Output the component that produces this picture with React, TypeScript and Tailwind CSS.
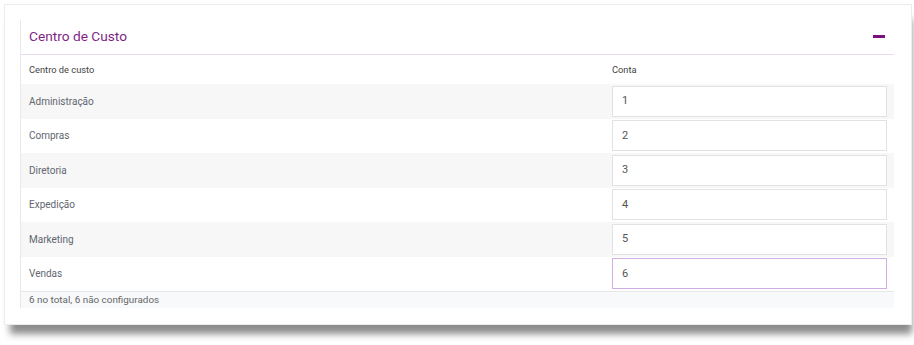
import React from "react"

const rows = [
  { name: "Administração", conta: "1" },
  { name: "Compras", conta: "2" },
  { name: "Diretoria", conta: "3" },
  { name: "Expedição", conta: "4" },
  { name: "Marketing", conta: "5" },
  { name: "Vendas", conta: "6" },
]

export default function App() {
  return (
    <div className="w-[914px] h-[345px] bg-white pt-[4px] pl-[4px] overflow-hidden" style={{ fontFamily: "Roboto, 'Liberation Sans', sans-serif" }}>
      <div className="w-[908px] h-[321px] bg-white border border-[#ececec] shadow-[3px_12px_7px_-3px_rgba(0,0,0,0.45)] pt-[15px] pl-[15px]">
        <div className="w-[874px] border-l border-[#e8e8e8]">
          {/* header */}
          <div className="h-[35px] flex items-center justify-between pl-[8px] pr-[9px] pb-[2px] border-b border-[#eadcf0]">
            <span className="text-[13.7px] text-[#7f1f86]">Centro de Custo</span>
            <span className="block w-[12px] h-[3px] bg-[#7a0f82]" />
          </div>

          {/* column titles */}
          <div className="h-[29px] flex items-center text-[9.3px] text-[#444]">
            <div className="w-[591px] pl-[8px]">Centro de custo</div>
            <div>Conta</div>
          </div>

          {rows.map((r, i) => (
            <div key={r.name} className={`h-[34.5px] flex items-center ${i % 2 === 0 ? "bg-[#f7f7f7]" : "bg-white"}`}>
              <div className="w-[591px] pl-[8px] text-[10px] text-[#5f6670]">{r.name}</div>
              <div className={`w-[275px] h-[31px] bg-white border flex items-center pl-[9px] text-[11px] text-[#555] ${i === rows.length - 1 ? "border-[#cfaee6]" : "border-[#e2e2e2]"}`}>
                {r.conta}
              </div>
            </div>
          ))}

          {/* footer */}
          <div className="h-[17px] border-t border-[#e6e6e6] bg-[#f8f9fb] flex items-center pl-[8px] text-[9.9px] text-[#666]">
            6 no total, 6 não configurados
          </div>
        </div>
      </div>
    </div>
  )
}
